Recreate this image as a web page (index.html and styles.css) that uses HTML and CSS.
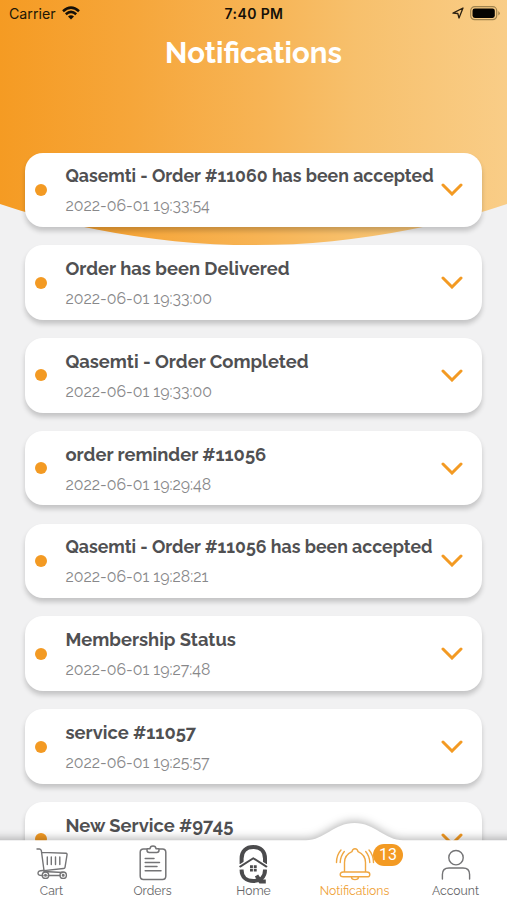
FILE: index.html
```html
<!DOCTYPE html>
<html lang="en">
<head>
<meta charset="utf-8">
<title>Notifications</title>
<link rel="stylesheet" href="styles.css">
</head>
<body>
<div class="app">
  <div class="backdrop"></div>
  <header class="status">
    <div class="carrier"><span>Carrier</span>
      <svg width="18" height="14" viewBox="0 0 18 14" fill="none" stroke="#151008" stroke-width="2.5"><path d="M1 5.2Q9-2 17 5.2M3.8 8.2Q9 3.6 14.2 8.2"/><path d="M6 10.5Q9 8 12 10.5L9 13.6Z" fill="#151008" stroke="none"/></svg>
    </div>
    <div class="time">7:40 PM</div>
    <div class="power">
      <svg width="12" height="12" viewBox="0 0 12 12" fill="none" stroke="#2c2112" stroke-width="1.3" stroke-linejoin="round"><path d="M1 6.2 11 1 7 11 5.8 6.5Z"/></svg>
      <svg width="31" height="15" viewBox="0 0 31 15"><rect x=".7" y=".7" width="26" height="13" rx="4" fill="none" stroke="#9f834e" stroke-width="1.2"/><rect x="2.5" y="2.5" width="22.3" height="9.4" rx="2.3" fill="#050402"/><path d="M28.3 5q3 2.3 0 4.6Z" fill="#9f834e"/></svg>
    </div>
  </header>
  <h1>Notifications</h1>
  <main class="list">
    <article class="card"><i class="dot"></i><div class="body"><h2 class="long">Qasemti - Order #11060 has been accepted</h2><p>2022-06-01 19:33:54</p></div><svg class="chevron" viewBox="0 0 22 13"><path d="M2 2 11 11 20 2"/></svg></article>
    <article class="card"><i class="dot"></i><div class="body"><h2>Order has been Delivered</h2><p>2022-06-01 19:33:00</p></div><svg class="chevron" viewBox="0 0 22 13"><path d="M2 2 11 11 20 2"/></svg></article>
    <article class="card"><i class="dot"></i><div class="body"><h2>Qasemti - Order Completed</h2><p>2022-06-01 19:33:00</p></div><svg class="chevron" viewBox="0 0 22 13"><path d="M2 2 11 11 20 2"/></svg></article>
    <article class="card"><i class="dot"></i><div class="body"><h2>order reminder #11056</h2><p>2022-06-01 19:29:48</p></div><svg class="chevron" viewBox="0 0 22 13"><path d="M2 2 11 11 20 2"/></svg></article>
    <article class="card"><i class="dot"></i><div class="body"><h2 class="long">Qasemti - Order #11056 has been accepted</h2><p>2022-06-01 19:28:21</p></div><svg class="chevron" viewBox="0 0 22 13"><path d="M2 2 11 11 20 2"/></svg></article>
    <article class="card"><i class="dot"></i><div class="body"><h2>Membership Status</h2><p>2022-06-01 19:27:48</p></div><svg class="chevron" viewBox="0 0 22 13"><path d="M2 2 11 11 20 2"/></svg></article>
    <article class="card"><i class="dot"></i><div class="body"><h2>service #11057</h2><p>2022-06-01 19:25:57</p></div><svg class="chevron" viewBox="0 0 22 13"><path d="M2 2 11 11 20 2"/></svg></article>
    <article class="card"><i class="dot"></i><div class="body"><h2>New Service #9745</h2><p>2022-06-01 19:25:57</p></div><svg class="chevron" viewBox="0 0 22 13"><path d="M2 2 11 11 20 2"/></svg></article>
  </main>
  <nav class="tabs">
    <svg class="tabshape" width="507" height="77" viewBox="0 0 507 77"><path d="M-10 17.3H306C324 17.3 334 0 354.5 0S385 17.3 403 17.3H517V87H-10Z" fill="#fff"/></svg>
    <a class="tab"><svg width="34" height="34" viewBox="0 0 34 34"><path d="M2 2H4.5Q6 2 6.4 4L9 23.5M6.5 5.4 31 6.3Q32.4 6.4 32 8L30 20.3Q29.8 21.4 28.5 21.5L9 23.6M8 23.5Q3 23.5 3 26.2T8 28.5M13 28.5H25M9 24.5 28 25.5"/><path d="M12.3 10V17.5M16.3 10V17.5M20.5 10V17.5M24.8 10V17.5" stroke-width="1.4"/><circle cx="10.5" cy="28.2" r="3.2"/><circle cx="28.2" cy="28.2" r="3.2"/><circle cx="10.5" cy="28.2" r=".8"/><circle cx="28.2" cy="28.2" r=".8"/></svg><span>Cart</span></a>
    <a class="tab"><svg width="28" height="36" viewBox="0 0 28 36"><path d="M8 4H4.5Q1.2 4 1.2 7.3V31Q1.2 34.5 4.5 34.5H23.5Q26.8 34.5 26.8 31V7.3Q26.8 4 23.5 4H20M8 3.7H11Q11.2 1 14 1T17 3.7H20V5.3Q20 7.4 17.8 7.4H10.2Q8 7.4 8 5.3ZM6.2 13.5H15M6.2 17.5H20.5M6.2 21.6H18M6.2 25.8H22" stroke-width="1.5"/></svg><span>Orders</span></a>
    <a class="tab home"><svg width="29" height="41" viewBox="0 0 29 41"><path d="M2.6 20V14.5C2.6 7 7.4 3 14.3 3S26 7 26 14.5V20M2.6 25.5V26C2.6 33 7.4 37 14.3 37S26 33 26 26V25.5M17.5 31.5 21.5 37.5H26.8" fill="none" stroke="#4b4b4d" stroke-width="4" stroke-linecap="butt" stroke-linejoin="miter"/><path d="M.8 23 14.3 14.3 27.8 23" stroke="#fff" stroke-width="4.5"/><path d="M1.2 22.6 14.3 14.3 27.4 22.6" stroke="#4b4b4d" stroke-width="1.9"/><path d="M11 21.2h2.9v2.7h-2.9ZM14.8 21.2h2.9v2.7h-2.9ZM11 24.8h2.9v2.7h-2.9ZM14.8 24.8h2.9v2.7h-2.9Z" fill="#4b4b4d" stroke="none"/></svg><span>Home</span></a>
    <a class="tab active"><svg width="40" height="34" viewBox="0 0 40 34"><path d="M9.5 25V15.5Q9.5 8 17 4.7 17.5 1.7 20 1.7T23 4.7Q30.5 8 30.5 15.5V25M8.2 25H31.8Q34.8 25 34.8 27.5T31.8 29.8H8.2Q5.2 29.8 5.2 27.5T8.2 25M16.5 30Q16.5 32.6 20 32.6T23.5 30M6 3Q1.5 8 1.5 15.5M9.3 4.5Q5.5 9 5.2 15.5M34 3Q38.5 8 38.5 15.5M30.7 4.5Q34.5 9 34.8 15.5"/></svg><span>Notifications</span><b class="badge">13</b></a>
    <a class="tab"><svg width="30" height="32" viewBox="0 0 30 32"><circle cx="15" cy="8.7" r="7.2"/><path d="M1.4 30V25.5Q1.4 19 8 19H22Q28.6 19 28.6 25.5V30"/></svg><span>Account</span></a>
  </nav>
</div>
</body>
</html>
```
FILE: styles.css
```css
* { box-sizing: border-box; margin: 0; padding: 0; }
body { background: #f1f1f2; overflow: hidden; }
.app {
  position: relative;
  width: 507px;
  height: 900px;
  overflow: hidden;
  font-family: Raleway, Lato, sans-serif;
  font-variant-numeric: oldstyle-nums proportional-nums;
}
.backdrop {
  position: absolute;
  inset: 0 0 auto;
  height: 246px;
  background: linear-gradient(90deg, #f59b23 0%, #f6a63a 26%, #f7b455 52%, #f7c06c 70%, #f9cd87 100%);
  clip-path: circle(804px at 253.5px -559px);
}
.status {
  position: relative;
  height: 28px;
  padding: 0 6px 0 9px;
  display: grid;
  grid-template-columns: 1fr auto 1fr;
  align-items: center;
  font-family: Inter, sans-serif;
  color: #201606;
}
.carrier { display: flex; align-items: center; gap: 6px; font-size: 14.2px; margin-top: -1px; }
.carrier svg { margin-top: -1px; }
.time { font-size: 14px; font-weight: 600; letter-spacing: .4px; color: #151008; margin: -1px 2px 0 0; }
.power { display: flex; justify-content: flex-end; align-items: center; gap: 6px; margin-top: -2px; }
h1 {
  position: relative;
  height: 124.5px;
  padding-top: 7px;
  text-align: center;
  color: #fff;
  font-size: 29.3px;
  line-height: 36px;
}
.list { position: relative; display: flex; flex-direction: column; gap: 18.3px; padding: 0 25px; }
.card {
  flex: none;
  height: 74.5px;
  display: flex;
  align-items: center;
  padding: 0 19px 0 10px;
  background: #fff;
  border-radius: 18px;
  box-shadow: 0 4px 5px rgba(0, 0, 0, .19);
}
.dot { flex: none; width: 12px; height: 12px; border-radius: 50%; background: #f39a23; margin-right: 18.5px; }
.body { flex: 1; min-width: 0; white-space: nowrap; padding-top: 3px; }
h2 { font-size: 18.35px; line-height: 26px; color: #505052; }
.long { font-size: 17.73px; }
.body p { margin-top: 4px; font-size: 15.9px; line-height: 26px; color: #88888a; }
.chevron { flex: none; width: 22px; height: 13px; fill: none; stroke: #f39a23; stroke-width: 3; stroke-linecap: round; }
.tabs {
  position: absolute;
  left: 0;
  bottom: 0;
  width: 507px;
  height: 60px;
  display: grid;
  grid-template-columns: repeat(5, 101px);
  justify-content: center;
}
.tabshape { position: absolute; left: 0; bottom: 0; filter: drop-shadow(0 -2px 4px rgba(0, 0, 0, .28)); overflow: visible; }
.tab {
  position: relative;
  height: 60px;
  display: flex;
  flex-direction: column;
  align-items: center;
  justify-content: flex-end;
  font-size: 12.2px;
  line-height: 18px;
  color: #666668;
}
.tab svg { fill: none; stroke: #747476; stroke-width: 1.4; stroke-linecap: round; stroke-linejoin: round; margin-bottom: 1px; }
.tab.home svg { margin-bottom: -3px; }
.tab span { height: 18px; }
.tab.active { color: #efa238; }
.active svg { stroke: #efa742; }
.badge {
  position: absolute;
  left: 69px;
  top: 4px;
  width: 30px;
  height: 22px;
  border-radius: 11px;
  background: #f39a23;
  color: #fff;
  font: 400 16px/22px Roboto, sans-serif;
  font-variant-numeric: lining-nums;
  text-align: center;
}
```
